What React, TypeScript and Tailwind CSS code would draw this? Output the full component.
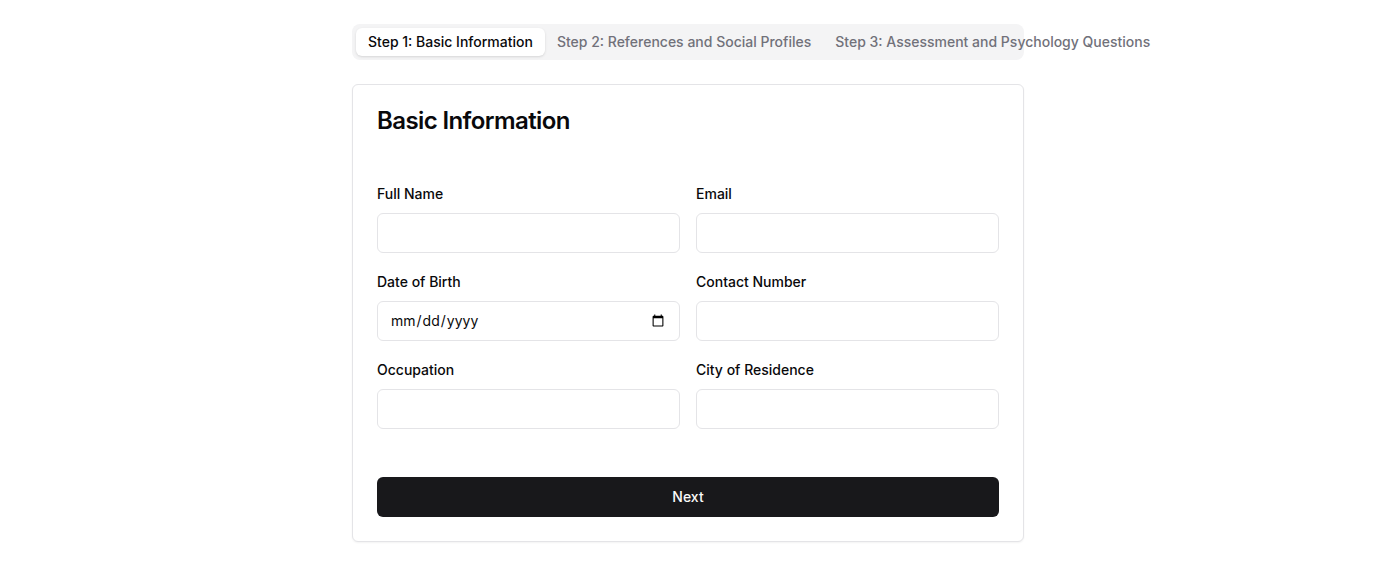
import { useState } from "react";

const steps = [
  "Step 1: Basic Information",
  "Step 2: References and Social Profiles",
  "Step 3: Assessment and Psychology Questions",
];

const fields = [
  { id: "fullName", label: "Full Name", type: "text" },
  { id: "email", label: "Email", type: "email" },
  { id: "dateOfBirth", label: "Date of Birth", type: "date" },
  { id: "contactNumber", label: "Contact Number", type: "tel" },
  { id: "occupation", label: "Occupation", type: "text" },
  { id: "city", label: "City of Residence", type: "text" },
];

export default function App() {
  const [active, setActive] = useState(0);

  return (
    <main className="mx-auto w-full max-w-2xl py-6 font-['Inter',sans-serif] text-[#09090b]">
      <div role="tablist" className="flex h-9 items-center rounded-lg bg-[#f4f4f5] p-1 text-[#71717a]">
        {steps.map((step, i) => (
          <button
            key={step}
            type="button"
            role="tab"
            aria-selected={i === active}
            onClick={() => setActive(i)}
            className="shrink-0 rounded-md px-3 py-1 text-sm font-medium whitespace-nowrap aria-selected:bg-white aria-selected:text-[#09090b] aria-selected:shadow"
          >
            {step}
          </button>
        ))}
      </div>

      <form
        onSubmit={(e) => e.preventDefault()}
        className="mt-6 rounded-md border border-[#e4e4e7] bg-white p-6 shadow-xs"
      >
        <h1 className="text-2xl leading-6 font-semibold tracking-tight">Basic Information</h1>
        <div className="mt-12 grid grid-cols-2 gap-4">
          {fields.map((field) => (
            <div key={field.id}>
              <label htmlFor={field.id} className="text-sm leading-none font-medium">
                {field.label}
              </label>
              <input
                id={field.id}
                type={field.type}
                className="mt-2 block h-10 w-full rounded-md border border-[#e4e4e7] bg-white px-3 py-2 text-sm"
              />
            </div>
          ))}
        </div>
        <button
          type="submit"
          className="mt-12 h-10 w-full rounded-md bg-[#18181b] px-4 py-2 text-sm font-medium text-[#fafafa]"
        >
          Next
        </button>
      </form>
    </main>
  );
}
